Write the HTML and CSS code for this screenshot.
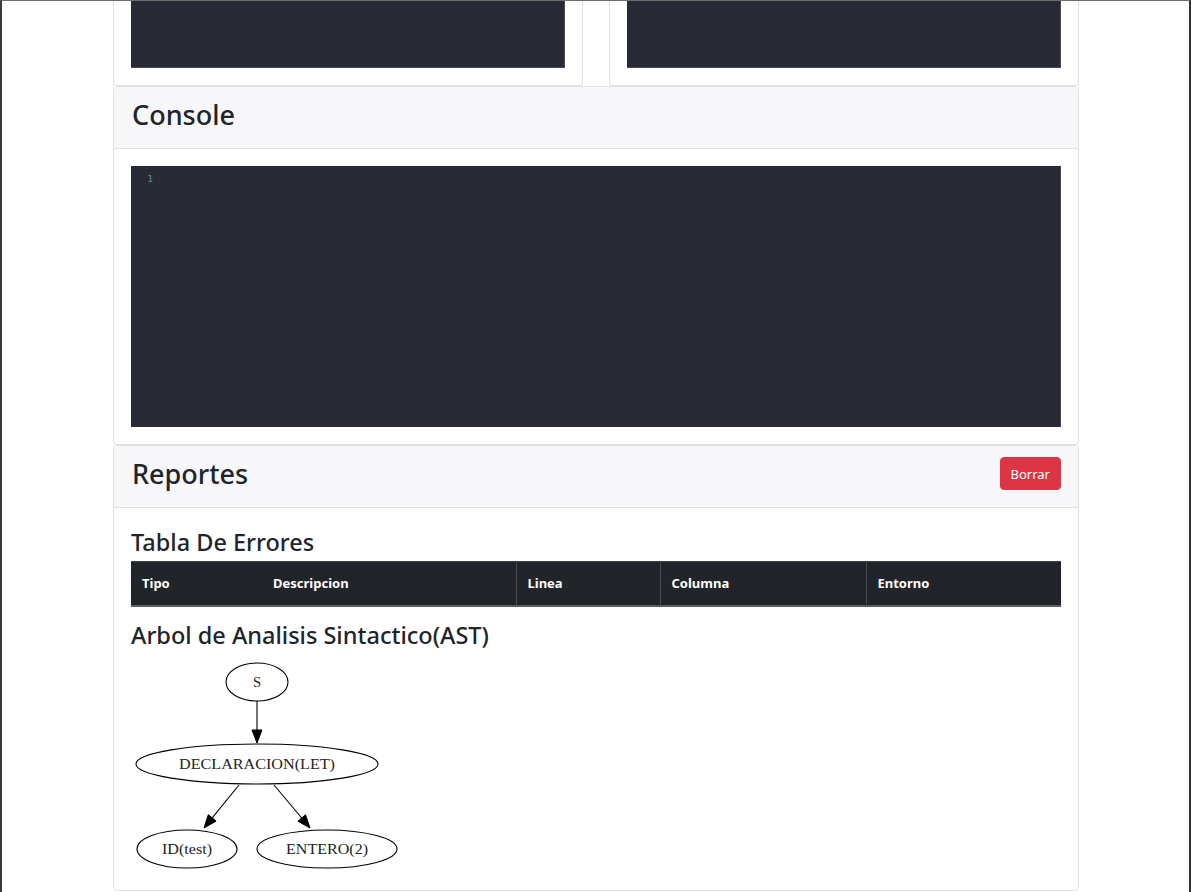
FILE: index.html
```html
<!DOCTYPE html>
<html lang="es">
<head>
<meta charset="utf-8">
<title>Compilador</title>
<link rel="stylesheet" href="styles.css">
</head>
<body>
<div class="frame">
  <div class="container">
    <div class="top-row">
      <div class="card card-cut">
        <div class="card-body">
          <div class="editor editor-short"></div>
        </div>
      </div>
      <div class="card card-cut">
        <div class="card-body">
          <div class="editor editor-short"></div>
        </div>
      </div>
    </div>

    <div class="card">
      <div class="card-header">
        <h3 class="title">Console</h3>
      </div>
      <div class="card-body">
        <div class="editor editor-console">
          <div class="gutter"><span class="lineno">1</span></div>
        </div>
      </div>
    </div>

    <div class="card">
      <div class="card-header header-flex">
        <h3 class="title">Reportes</h3>
        <button class="btn-danger" type="button">Borrar</button>
      </div>
      <div class="card-body body-reports">
        <h4 class="subtitle subtitle-table">Tabla De Errores</h4>
        <table class="table-dark">
          <thead>
            <tr>
              <th class="c-tipo">Tipo</th>
              <th class="c-desc">Descripcion</th>
              <th class="c-linea sep">Linea</th>
              <th class="c-col sep">Columna</th>
              <th class="c-ent sep">Entorno</th>
            </tr>
          </thead>
        </table>
        <h4 class="subtitle">Arbol de Analisis Sintactico(AST)</h4>
        <svg class="ast" width="270" height="215" viewBox="0 0 270 215" xmlns="http://www.w3.org/2000/svg">
          <g fill="none" stroke="#000" stroke-width="1.1">
            <ellipse cx="126" cy="24" rx="31" ry="19"/>
            <ellipse cx="126" cy="106" rx="121" ry="20"/>
            <ellipse cx="56" cy="191" rx="50" ry="19"/>
            <ellipse cx="196" cy="191" rx="70" ry="19"/>
            <line x1="126" y1="43" x2="126" y2="72"/>
            <line x1="108" y1="127" x2="81.2" y2="159.9"/>
            <line x1="143" y1="127" x2="170.7" y2="160"/>
          </g>
          <g fill="#000" stroke="#000" stroke-width="1">
            <polygon points="121,72 131,72 126,85"/>
            <polygon points="85.1,163.1 77.3,156.7 73,170"/>
            <polygon points="174.5,156.8 166.9,163.2 179,170"/>
          </g>
          <g class="ast-text" text-anchor="middle">
            <text x="126" y="29">S</text>
            <text x="126" y="111" textLength="156" lengthAdjust="spacingAndGlyphs">DECLARACION(LET)</text>
            <text x="56" y="196" textLength="50" lengthAdjust="spacingAndGlyphs">ID(test)</text>
            <text x="196" y="196" textLength="82" lengthAdjust="spacingAndGlyphs">ENTERO(2)</text>
          </g>
        </svg>
      </div>
    </div>
  </div>
</div>
</body>
</html>
```

FILE: styles.css
```css
html, body {
  margin: 0;
  padding: 0;
  background: #ffffff;
}

.frame {
  box-sizing: border-box;
  width: 1191px;
  height: 892px;
  overflow: hidden;
  border-top: 1px solid #6e6e6e;
  border-left: 2px solid #3a3a3a;
  border-right: 2px solid #2e2e2e;
  font-family: "Noto Sans", "Open Sans", "Liberation Sans", sans-serif;
  color: #212529;
}

.container {
  width: 966px;
  margin: 0 0 0 111px;
}

.top-row {
  display: grid;
  grid-template-columns: 470px 470px;
  column-gap: 26px;
}

.card {
  box-sizing: border-box;
  background: #fff;
  border: 1px solid #dfdfdf;
  border-radius: 4px;
}

.card-cut {
  border-top: none;
  border-top-left-radius: 0;
  border-top-right-radius: 0;
}

.card-cut .card-body {
  padding-top: 0;
}

.card-body {
  padding: 17px;
}

.body-reports {
  padding-top: 20px;
}

.card-header {
  background: #f7f7f9;
  border-bottom: 1px solid #dfdfdf;
  padding: 11px 18px 16px 18px;
  border-radius: 3px 3px 0 0;
}

.header-flex {
  display: flex;
  align-items: flex-start;
  justify-content: space-between;
}

.header-flex .btn-danger {
  margin-top: 0;
}

.title {
  margin: 0;
  font-size: 27px;
  line-height: 34px;
  font-weight: 500;
  color: #212529;
}

.btn-danger {
  background: #dc3545;
  border: 1px solid #dc3545;
  color: #fff;
  font-family: "Noto Sans", "Open Sans", "Liberation Sans", sans-serif;
  font-size: 13px;
  line-height: 20px;
  padding: 6px 10px 5px 10px;
  border-radius: 4px;
  margin-right: -1px;
}

.editor {
  background: #282a36;
  box-sizing: border-box;
}

.editor-short {
  height: 67px;
  border-right: 1px solid #4a4c57;
  border-bottom: 1px solid #4a4c57;
}

.editor-console {
  height: 261px;
  border-right: 1px solid #44465a;
  display: flex;
}

.gutter {
  width: 26px;
  padding-top: 7px;
  text-align: right;
}

.lineno {
  display: block;
  padding-right: 4px;
  font-family: "DejaVu Sans Mono", "Liberation Mono", monospace;
  font-size: 9.5px;
  line-height: 12px;
  color: #6d8a9c;
}

.subtitle {
  margin: 0 0 5px 0;
  font-size: 23.5px;
  line-height: 29px;
  font-weight: 500;
  color: #212529;
}

.subtitle-table {
  margin-bottom: 4px;
}

.table-dark {
  width: 930px;
  border-collapse: collapse;
  background: #212529;
  margin-bottom: 14px;
  table-layout: fixed;
}

.table-dark th {
  height: 44px;
  box-sizing: border-box;
  padding: 0 11px;
  text-align: left;
  color: #fff;
  font-size: 13px;
  font-weight: 700;
  border-top: 1px solid #3d434a;
  border-bottom: 2px solid #5a5f64;
}

.table-dark th.sep {
  border-left: 1px solid #454d55;
}

.c-tipo { width: 131px; padding-left: 10px; }
.c-desc { width: 254px; }
.c-linea { width: 144px; }
.c-col { width: 206px; }
.c-ent { width: auto; }

.ast {
  display: block;
  margin: 8px 0 0 0;
}

.ast-text text {
  font-family: "Liberation Serif", "DejaVu Serif", serif;
  font-size: 14.5px;
  fill: #222;
}
```
